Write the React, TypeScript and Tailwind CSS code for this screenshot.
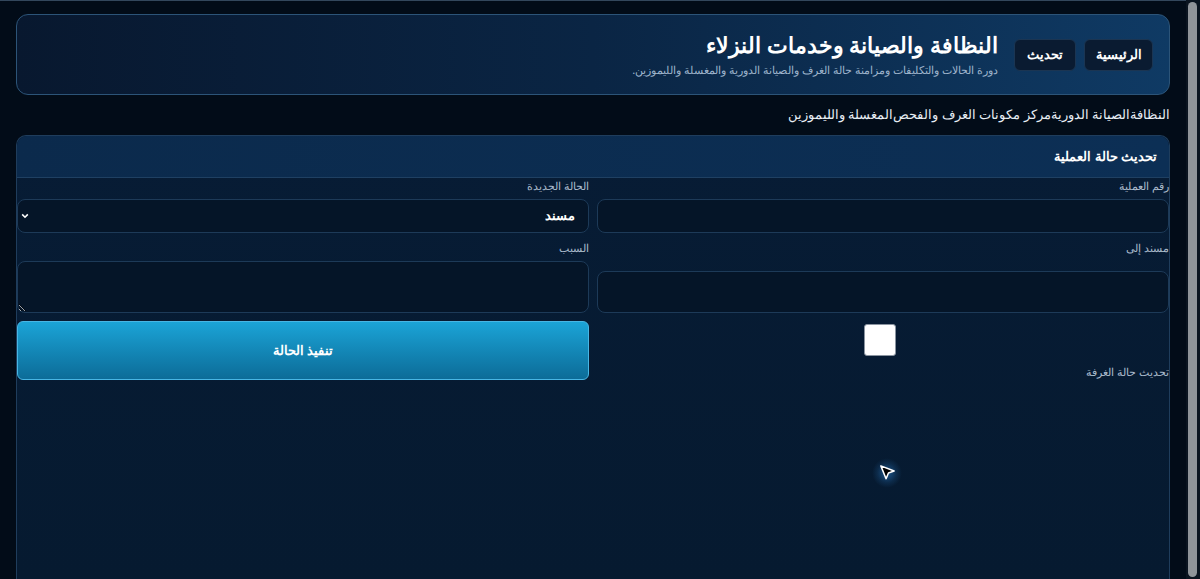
import React from "react";

const NAV = ["النظافة", "الصيانة الدورية", "مركز مكونات الغرف والفحص", "المغسلة والليموزين"];

function Cursor() {
  return (
    <div className="pointer-events-none absolute left-[872px] top-[458px] h-[30px] w-[30px] rounded-full bg-[radial-gradient(circle,rgba(56,160,255,0.45)_0%,rgba(56,160,255,0.12)_45%,rgba(56,160,255,0)_70%)]">
      <svg
        viewBox="0 0 20 20"
        className="absolute left-[6px] top-[5px] h-[19px] w-[19px]"
      >
        <path
          d="M3 3 L17 8.5 L11 10.5 L8.5 16.5 Z"
          fill="#000"
          stroke="#fff"
          strokeWidth="1.6"
          strokeLinejoin="round"
        />
      </svg>
    </div>
  );
}

export default function App() {
  return (
    <div className="relative flex h-screen w-full overflow-hidden bg-[#020c18] font-['Noto_Sans',sans-serif]">
      <div
        dir="rtl"
        className="flex min-w-0 flex-1 flex-col border-t border-[#33475c] px-4 pt-[13px]"
      >
        {/* Header */}
        <header className="flex h-[81px] shrink-0 items-center gap-4 rounded-[12px] border border-[#2c5478] bg-gradient-to-l from-[#0f3a64] via-[#0a2544] to-[#08182f] px-4">
          <div className="flex items-center gap-2">
            <button className="h-8 rounded-md border border-[#1b3552] bg-[#0a1b31] px-[10.5px] text-[13px] font-bold text-white">
              الرئيسية
            </button>
            <button className="h-8 rounded-md border border-[#1b3552] bg-[#0a1b31] px-3 text-[13px] font-bold text-white">
              تحديث
            </button>
          </div>
          <div>
            <h1 className="text-[22px] font-bold leading-7 text-white">
              النظافة والصيانة وخدمات النزلاء
            </h1>
            <p className="mt-[3px] text-[11.4px] text-[#9db3cb]">
              دورة الحالات والتكليفات ومزامنة حالة الغرف والصيانة الدورية والمغسلة والليموزين.
            </p>
          </div>
        </header>

        {/* Nav links */}
        <nav className="flex h-[40px] shrink-0 items-center text-[13px] text-[#e8eef5]">
          {NAV.map((n) => (
            <a key={n} href="#">
              {n}
            </a>
          ))}
        </nav>

        {/* Card */}
        <section className="flex min-h-0 flex-1 flex-col rounded-t-[10px] border border-b-0 border-[#1f3d5c] bg-gradient-to-b from-[#071c35] to-[#061a30]">
          <div className="flex h-[42px] shrink-0 items-center rounded-t-[10px] border-b border-[#1f4062] bg-gradient-to-l from-[#0c2f55] to-[#0b2a4c] px-3">
            <h2 className="text-[13px] font-bold text-white">تحديث حالة العملية</h2>
          </div>

          <div className="grid grid-cols-2 gap-x-2 gap-y-2 pt-[1px]">
            {/* Row 1 */}
            <div className="flex flex-col gap-[7px]">
              <label className="text-[11px] leading-[13px] text-[#a9b9ca]">رقم العملية</label>
              <input className="h-[34px] rounded-lg border border-[#1d3a58] bg-[#051528] px-3 text-white outline-none" />
            </div>
            <div className="flex flex-col gap-[7px]">
              <label className="text-[11px] leading-[13px] text-[#a9b9ca]">الحالة الجديدة</label>
              <div className="relative">
                <select
                  defaultValue="assigned"
                  className="h-[34px] w-full appearance-none rounded-lg border border-[#1d3a58] bg-[#051528] pl-4 pr-[13px] text-[13px] font-bold text-white outline-none"
                >
                  <option value="assigned">مسند</option>
                </select>
                <svg
                  viewBox="0 0 10 10"
                  className="pointer-events-none absolute left-[4px] top-[13px] h-[8px] w-[8px]"
                >
                  <path d="M1.5 3 L5 6.5 L8.5 3" fill="none" stroke="#fff" strokeWidth="2" />
                </svg>
              </div>
            </div>

            {/* Row 2 */}
            <div className="flex flex-col">
              <label className="text-[11px] leading-[13px] text-[#a9b9ca]">مسند إلى</label>
              <input className="mt-auto h-[42px] rounded-lg border border-[#1d3a58] bg-[#051528] px-3 text-white outline-none" />
            </div>
            <div className="flex flex-col gap-[7px]">
              <label className="text-[11px] leading-[13px] text-[#a9b9ca]">السبب</label>
              <textarea className="h-[52px] rounded-lg border border-[#1d3a58] bg-[#051528] px-3 text-white outline-none" />
            </div>

            {/* Row 3 */}
            <div className="flex flex-col items-stretch pt-[3px]">
              <div className="flex justify-center">
                <input
                  type="checkbox"
                  className="mr-[6px] h-8 w-8 appearance-none rounded-[3px] border border-[#8a94a0] bg-white"
                />
              </div>
              <label className="mt-[9px] text-[11px] leading-[13px] text-[#a9b9ca]">تحديث حالة الغرفة</label>
            </div>
            <div>
              <button className="h-[59px] w-full rounded-md border border-[#48b6e4] bg-gradient-to-b from-[#1ba4d7] to-[#0c6c98] text-[13px] font-bold text-white">
                تنفيذ الحالة
              </button>
            </div>
          </div>
        </section>
      </div>

      {/* Scrollbar */}
      <div className="flex w-[14px] shrink-0 flex-col bg-[#0a1420] py-[2px] pl-[2px] pr-[3px]">
        <div className="flex-1 rounded-full bg-[#8f9499]" />
      </div>

      <Cursor />
    </div>
  );
}
